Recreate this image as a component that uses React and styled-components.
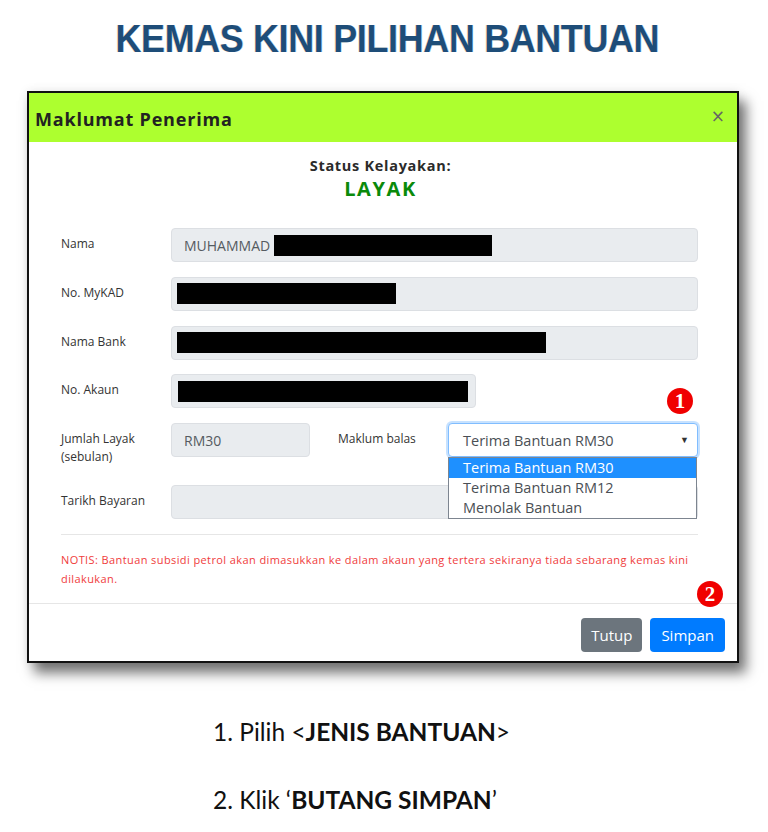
import React from "react";
import styled, { createGlobalStyle } from "styled-components";

const Global = createGlobalStyle`
  html, body { margin: 0; padding: 0; background: #ffffff; }
  body { font-family: "Open Sans", "Noto Sans", sans-serif; }
  * { box-sizing: border-box; }
`;

const Page = styled.div`
  width: 768px;
  min-height: 832px;
  padding-top: 16px;
  background: #fff;
`;

const Title = styled.h1`
  margin: 0;
  padding-left: 6px;
  text-align: center;
  font-family: "Liberation Sans", Arial, sans-serif;
  font-weight: 700;
  font-size: 38.5px;
  line-height: 45px;
  color: #1e4d78;
`;

const TitleText = styled.span`
  display: inline-block;
  letter-spacing: -0.3px;
  transform: scaleX(0.93);
  text-shadow: -0.7px 0 0 rgba(240, 190, 120, 0.55), 0.7px 0 0 rgba(120, 170, 230, 0.55);
`;

const Modal = styled.div`
  position: relative;
  margin: 30px 0 0 27px;
  width: 712px;
  border: 2px solid #111;
  background: #fff;
  box-shadow: 7px 10px 12px rgba(0, 0, 0, 0.55), 0 0 10px rgba(0, 0, 0, 0.08);
`;

const Header = styled.div`
  height: 49px;
  background: #adff2f;
  display: flex;
  align-items: center;
  justify-content: space-between;
  padding: 0 12px 0 6px;
`;

const HeaderTitle = styled.div`
  font-weight: 700;
  font-size: 18px;
  letter-spacing: 0.8px;
  color: #222;
  margin-top: 2px;
`;

const Close = styled.span`
  font-family: "DejaVu Sans", sans-serif;
  font-size: 17px;
  color: #666;
  margin-top: -3px;
`;

const Body = styled.div`
  padding: 14px 39px 15px 32px;
`;

const Status = styled.div`
  text-align: center;
  padding-left: 2px;
`;

const StatusLabel = styled.div`
  font-size: 14.5px;
  font-weight: 700;
  line-height: 20px;
  letter-spacing: 0.7px;
  color: #2b2b2b;
`;

const StatusValue = styled.div`
  margin-top: 1px;
  font-size: 20px;
  font-weight: 700;
  line-height: 24px;
  letter-spacing: 1.6px;
  color: #0a8a0a;
`;

const Form = styled.div`
  margin-top: 27px;
  display: flex;
  flex-direction: column;
  gap: 14.75px;
`;

const Row = styled.div`
  display: grid;
  grid-template-columns: ${(p) => p.$cols || "110px 1fr"};
  align-items: start;
  min-height: ${(p) => p.$minH || "34px"};
`;

const Label = styled.div`
  padding-top: 7px;
  font-size: 12px;
  line-height: 18px;
  color: #333;
`;

const Field = styled.div`
  height: 34px;
  width: ${(p) => p.$w || "auto"};
  display: flex;
  align-items: center;
  padding: 0 ${(p) => (p.$pad ? p.$pad : "12px")};
  background: #e9ecef;
  border: 1px solid #dcdfe3;
  border-radius: 4px;
  font-size: 14px;
  color: #555b61;
`;

const Redact = styled.span`
  display: inline-block;
  width: ${(p) => p.$w}px;
  height: 21px;
  margin-left: ${(p) => p.$ml || 0}px;
  background: #000;
`;

const SelectWrap = styled.div`
  position: relative;
`;

const SelectBox = styled.div`
  height: 34px;
  display: flex;
  align-items: center;
  justify-content: space-between;
  padding: 0 8px 0 14px;
  border: 1px solid #80bdff;
  border-radius: 4px;
  box-shadow: 0 0 0 2px rgba(0, 123, 255, 0.22);
  font-size: 14.5px;
  color: #4a4f55;
  background: #fff;
`;

const Caret = styled.span`
  font-size: 9px;
  color: #333;
  margin-top: -2px;
`;

const OptionList = styled.div`
  position: absolute;
  top: 34px;
  left: 0;
  width: 249px;
  border: 1px solid #7d8590;
  background: #fff;
  z-index: 2;
`;

const Option = styled.div`
  height: 20px;
  line-height: 20px;
  padding-left: 14px;
  font-size: 14.5px;
  color: ${(p) => (p.$active ? "#fff" : "#4a4f55")};
  background: ${(p) => (p.$active ? "#1e90ff" : "#fff")};
`;

const Badge = styled.span`
  position: absolute;
  width: 26px;
  height: 26px;
  border-radius: 50%;
  background: #f00000;
  color: #fff;
  display: flex;
  align-items: center;
  justify-content: center;
  font-family: "Liberation Serif", "DejaVu Serif", serif;
  font-weight: 700;
  font-size: 21px;
  line-height: 1;
  z-index: 3;
  ${(p) => p.$pos}
`;

const Divider = styled.hr`
  margin: 15px 0 0;
  border: 0;
  border-top: 1px solid #e6e6e6;
`;

const Notice = styled.p`
  margin: 15px 0 0;
  font-size: 11px;
  line-height: 19px;
  letter-spacing: 0.4px;
  color: #f03c3c;
`;

const Footer = styled.div`
  position: relative;
  border-top: 1px solid #e6e6e6;
  padding: 14px 12px 9px;
  display: flex;
  justify-content: flex-end;
  gap: 8px;
`;

const Button = styled.button`
  height: 34px;
  padding: 0 ${(p) => (p.$primary ? "11px" : "10px")};
  border: 0;
  border-radius: 4px;
  font-family: "Open Sans", sans-serif;
  font-size: 15px;
  color: #fff;
  background: ${(p) => (p.$primary ? "#007bff" : "#6c757d")};
`;

const Steps = styled.ol`
  list-style: none;
  margin: 54px 0 0 213px;
  padding: 0;
  display: flex;
  flex-direction: column;
  gap: 38px;
`;

const Step = styled.li`
  font-family: Lato, "Open Sans", sans-serif;
  font-size: 24.5px;
  line-height: 30px;
  color: #111;
  b { font-weight: 700; }
`;

export default function App() {
  return (
    <>
      <Global />
      <Page>
        <Title>
          <TitleText>KEMAS KINI PILIHAN BANTUAN</TitleText>
        </Title>
        <Modal>
          <Header>
            <HeaderTitle>Maklumat Penerima</HeaderTitle>
            <Close>×</Close>
          </Header>
          <Body>
            <Status>
              <StatusLabel>Status Kelayakan:</StatusLabel>
              <StatusValue>LAYAK</StatusValue>
            </Status>
            <Form>
              <Row>
                <Label>Nama</Label>
                <Field>
                  MUHAMMAD
                  <Redact $w={218} $ml={4} />
                </Field>
              </Row>
              <Row>
                <Label>No. MyKAD</Label>
                <Field $pad="5px">
                  <Redact $w={219} />
                </Field>
              </Row>
              <Row>
                <Label>Nama Bank</Label>
                <Field $pad="5px">
                  <Redact $w={369} />
                </Field>
              </Row>
              <Row>
                <Label>No. Akaun</Label>
                <Field $pad="6px" $w="305px">
                  <Redact $w={290} />
                </Field>
              </Row>
              <Row $cols="110px 139px 28px 110px 250px" $minH="47.25px">
                <Label>
                  Jumlah Layak
                  <br />
                  (sebulan)
                </Label>
                <Field>RM30</Field>
                <span />
                <Label>Maklum balas</Label>
                <SelectWrap>
                  <Badge $pos="left: 219px; top: -35px;">1</Badge>
                  <SelectBox>
                    <span>Terima Bantuan RM30</span>
                    <Caret>▼</Caret>
                  </SelectBox>
                  <OptionList>
                    <Option $active>Terima Bantuan RM30</Option>
                    <Option>Terima Bantuan RM12</Option>
                    <Option>Menolak Bantuan</Option>
                  </OptionList>
                </SelectWrap>
              </Row>
              <Row>
                <Label>Tarikh Bayaran</Label>
                <Field />
              </Row>
            </Form>
            <Divider />
            <Notice>
              NOTIS: Bantuan subsidi petrol akan dimasukkan ke dalam akaun yang tertera sekiranya tiada sebarang kemas kini dilakukan.
            </Notice>
          </Body>
          <Footer>
            <Badge $pos="right: 14px; top: -23px;">2</Badge>
            <Button>Tutup</Button>
            <Button $primary>Simpan</Button>
          </Footer>
        </Modal>
        <Steps>
          <Step>
            1. Pilih &lt;<b>JENIS BANTUAN</b>&gt;
          </Step>
          <Step>
            2. Klik ‘<b>BUTANG SIMPAN</b>’
          </Step>
        </Steps>
      </Page>
    </>
  );
}
